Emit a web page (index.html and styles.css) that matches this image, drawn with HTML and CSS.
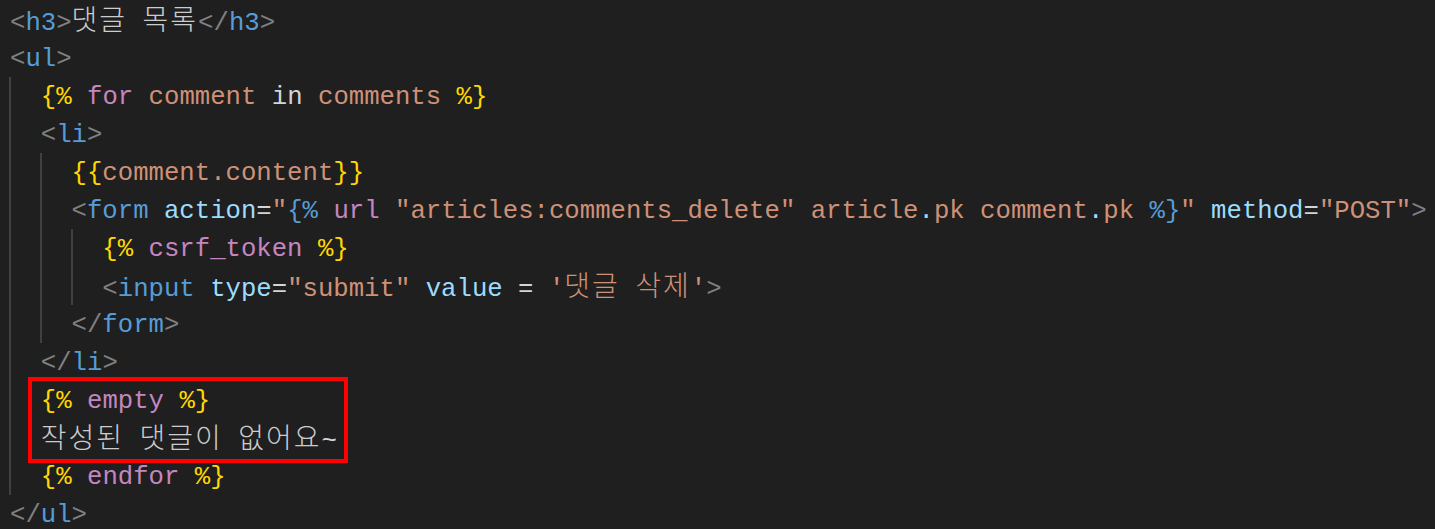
FILE: index.html
```html
<!DOCTYPE html>
<html lang="ko">
<head>
<meta charset="utf-8">
<title>댓글 목록</title>
<link rel="stylesheet" href="styles.css">
</head>
<body>
<div class="code">
  <div class="line"><span class="p">&lt;</span><span class="t">h3</span><span class="p">&gt;</span><span class="ko">댓글</span> <span class="ko">목록</span><span class="p">&lt;/</span><span class="t">h3</span><span class="p">&gt;</span></div>
  <div class="line"><span class="p">&lt;</span><span class="t">ul</span><span class="p">&gt;</span></div>
  <div class="block">
    <div class="line"><span class="y">{%</span> <span class="k">for</span> <span class="s">comment</span> <span class="w">in</span> <span class="s">comments</span> <span class="y">%}</span></div>
    <div class="line"><span class="p">&lt;</span><span class="t">li</span><span class="p">&gt;</span></div>
    <div class="block">
      <div class="line"><span class="y">{{</span><span class="s">comment.content</span><span class="y">}}</span></div>
      <div class="line"><span class="p">&lt;</span><span class="t">form</span> <span class="a">action</span><span class="w">=</span><span class="s">"</span><span class="t">{%</span> <span class="k">url</span> <span class="s">"articles:comments_delete"</span> <span class="s">article</span><span class="a">.</span><span class="s">pk</span> <span class="s">comment</span><span class="a">.</span><span class="s">pk</span> <span class="t">%}</span><span class="s">"</span> <span class="a">method</span><span class="w">=</span><span class="s">"POST"</span><span class="p">&gt;</span></div>
      <div class="block">
        <div class="line"><span class="y">{%</span> <span class="k">csrf_token</span> <span class="y">%}</span></div>
        <div class="line"><span class="p">&lt;</span><span class="t">input</span> <span class="a">type</span><span class="w">=</span><span class="s">"submit"</span> <span class="a">value</span> <span class="w">=</span> <span class="s">'<span class="ko">댓글</span> <span class="ko">삭제</span>'</span><span class="p">&gt;</span></div>
      </div>
      <div class="line"><span class="p">&lt;/</span><span class="t">form</span><span class="p">&gt;</span></div>
    </div>
    <div class="line"><span class="p">&lt;/</span><span class="t">li</span><span class="p">&gt;</span></div>
    <div class="highlight">
      <div class="line"><span class="y">{%</span> <span class="k">empty</span> <span class="y">%}</span></div>
      <div class="line"><span class="ko">작성된</span> <span class="ko">댓글이</span> <span class="ko">없어요</span><span class="w">~</span></div>
    </div>
    <div class="line"><span class="y">{%</span> <span class="k">endfor</span> <span class="y">%}</span></div>
  </div>
  <div class="line"><span class="p">&lt;/</span><span class="t">ul</span><span class="p">&gt;</span></div>
</div>
</body>
</html>
```

FILE: styles.css
```css
html, body {
  margin: 0;
  padding: 0;
  background: #1f1f1f;
}

body {
  padding: 1px 0 0 10px;
  overflow: hidden;
}

.code {
  font-family: "Liberation Mono", "Noto Sans CJK KR", monospace;
  font-size: 25.67px;
  color: #d4d4d4;
}

.line {
  box-sizing: border-box;
  height: 38px;
  padding-top: 3px;
  line-height: 35px;
  white-space: pre;
}

.block {
  border-left: 2px solid #404040;
  margin-left: -1px;
  padding-left: calc(2ch - 1px);
}

.highlight {
  width: fit-content;
  margin-left: -9px;
  padding: 0 7px 2px 9px;
  margin-bottom: -2px;
  outline: 4px solid #ff0000;
}

.ko {
  font-family: "Noto Sans CJK KR", sans-serif;
  font-size: 28px;
  font-weight: 300;
  letter-spacing: 2px;
  line-height: 1;
}

.line > .ko {
  color: #cccccc;
}

.p { color: #808080; }
.t { color: #569cd6; }
.a { color: #9cdcfe; }
.s { color: #ce9178; }
.w { color: #d4d4d4; }
.k { color: #c586c0; }
.y { color: #ffd700; }
```
